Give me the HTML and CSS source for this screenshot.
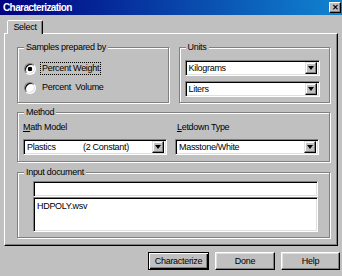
FILE: index.html
```html
<!DOCTYPE html>
<html lang="en">
<head>
    <meta charset="UTF-8">
    <title>Characterization</title>
    <link rel="stylesheet" href="styles.css">
</head>
<body>
    <div class="window">
        <div class="titlebar">
            <span class="title">Characterization</span>
            <span class="close-btn">&#x2715;</span>
        </div>
        <div class="tabs">
            <div class="tab">Select</div>
        </div>
        <div class="panel">
            <div class="top-row">
                <fieldset class="group">
                    <legend>Samples prepared by</legend>
                    <div class="group-body samples">
                        <div class="radio-row">
                            <span class="radio checked"></span>
                            <span class="radio-label focused">Percent Weight</span>
                        </div>
                        <div class="radio-row">
                            <span class="radio"></span>
                            <span class="radio-label">Percent&nbsp; Volume</span>
                        </div>
                    </div>
                </fieldset>
                <fieldset class="group">
                    <legend>Units</legend>
                    <div class="group-body units">
                        <div class="combo"><span class="combo-text">Kilograms</span><span class="combo-btn"></span></div>
                        <div class="combo"><span class="combo-text">Liters</span><span class="combo-btn"></span></div>
                    </div>
                </fieldset>
            </div>
            <fieldset class="group">
                <legend>Method</legend>
                <div class="group-body method">
                    <div class="field">
                        <div class="field-label"><u>M</u>ath Model</div>
                        <div class="combo"><span class="combo-text"><span class="col-a">Plastics</span>(2 Constant)</span><span class="combo-btn"></span></div>
                    </div>
                    <div class="field">
                        <div class="field-label"><u>L</u>etdown Type</div>
                        <div class="combo"><span class="combo-text">Masstone/White</span><span class="combo-btn"></span></div>
                    </div>
                </div>
            </fieldset>
            <fieldset class="group input-doc">
                <legend>Input document</legend>
                <div class="group-body doc">
                    <div class="edit-box"></div>
                    <div class="list-box">HDPOLY.wsv</div>
                </div>
            </fieldset>
        </div>
        <div class="buttons">
            <button class="btn default">Characterize</button>
            <button class="btn">Done</button>
            <button class="btn">Help</button>
        </div>
    </div>
</body>
</html>
```

FILE: styles.css
```css
:root {
    --face: #c0c0c0;
    --shadow: #808080;
    --light: #dfdfdf;
    --hilite: #fff;
    --dark: #000;
}
body {
    margin: 0;
    background: var(--face);
    font-family: 'Liberation Sans', Arial, sans-serif;
    font-size: 9px;
    letter-spacing: -0.3px;
    color: #000;
}
.window {
    width: 342px;
    height: 276px;
    background: var(--face);
    display: flex;
    flex-direction: column;
}
.titlebar {
    height: 15px;
    background: linear-gradient(to right, #000080, #1084d0);
    display: flex;
    align-items: center;
    justify-content: space-between;
    padding: 0 1px 0 3px;
}
.title {
    color: #fff;
    font-weight: bold;
    font-size: 10px;
    letter-spacing: -0.6px;
    line-height: 14px;
}
.close-btn {
    width: 10px;
    height: 9px;
    background: var(--face);
    border: 1px solid;
    border-color: var(--hilite) var(--dark) var(--dark) var(--hilite);
    box-shadow: inset -1px -1px 0 var(--shadow);
    font-size: 8px;
    font-weight: bold;
    line-height: 9px;
    text-align: center;
    letter-spacing: 0;
}
.tabs {
    display: flex;
    margin-top: 5px;
    padding-left: 7px;
}
.tab {
    position: relative;
    z-index: 1;
    width: 34px;
    height: 13px;
    margin-bottom: -1px;
    background: var(--face);
    border: 1px solid;
    border-bottom: none;
    border-color: var(--hilite) var(--dark) transparent var(--hilite);
    border-radius: 2px 2px 0 0;
    box-shadow: inset -1px 0 0 var(--shadow);
    line-height: 13px;
    text-align: center;
}
.panel {
    margin: 0 4px;
    border: 1px solid;
    border-color: var(--hilite) var(--dark) var(--dark) var(--hilite);
    box-shadow: inset -1px -1px 0 var(--shadow);
    padding: 8px 7px 7px 12px;
    display: flex;
    flex-direction: column;
    gap: 4px;
}
.top-row {
    display: grid;
    grid-template-columns: 1fr 1fr;
    gap: 10px;
}
.group {
    margin: 0;
    padding: 0;
    min-width: 0;
    border: 1px solid var(--shadow);
    box-shadow: inset 1px 1px 0 var(--hilite), 1px 1px 0 var(--hilite);
}
.group legend {
    margin-left: 6px;
    padding: 0 2px;
    line-height: 11px;
    background: var(--face);
}
.samples { padding: 9px 6px 8px 6px; }
.units { padding: 7px 9px 5px 5px; }
.units .combo + .combo { margin-top: 5px; }
.radio-row {
    display: flex;
    align-items: center;
    height: 13px;
}
.radio-row + .radio-row { margin-top: 6px; }
.radio {
    width: 10px;
    height: 10px;
    border-radius: 50%;
    background: #fff;
    border: 1px solid;
    border-color: var(--shadow) var(--hilite) var(--hilite) var(--shadow);
    box-shadow: inset 1px 1px 0 var(--dark), inset -1px -1px 0 var(--light);
}
.radio.checked {
    background: radial-gradient(circle, #000 0, #000 2px, #fff 2.6px);
}
.radio-label {
    margin-left: 4px;
    padding: 0 1px;
    line-height: 11px;
    border: 1px dotted transparent;
}
.radio-label.focused { border-color: #000; }
.combo {
    height: 16px;
    box-sizing: border-box;
    background: #fff;
    border: 1px solid;
    border-color: var(--shadow) var(--hilite) var(--hilite) var(--shadow);
    box-shadow: inset 1px 1px 0 var(--dark), inset -1px -1px 0 var(--light);
    display: flex;
    align-items: center;
    padding: 2px;
}
.combo-text {
    flex: 1;
    padding-left: 1px;
    line-height: 11px;
    white-space: nowrap;
}
.col-a {
    display: inline-block;
    width: 56px;
}
.combo-btn {
    width: 10px;
    height: 10px;
    background: var(--face);
    border: 1px solid;
    border-color: var(--light) var(--dark) var(--dark) var(--light);
    box-shadow: inset -1px -1px 0 var(--shadow), inset 1px 1px 0 var(--hilite);
    display: flex;
    align-items: center;
    justify-content: center;
}
.combo-btn::after {
    content: '';
    border-left: 3px solid transparent;
    border-right: 3px solid transparent;
    border-top: 4px solid #000;
}
.method {
    padding: 4px 10px 6px 5px;
    display: grid;
    grid-template-columns: 1fr 1fr;
    gap: 8px;
}
.field-label {
    line-height: 11px;
    margin-bottom: 6px;
}
.field:last-child .field-label { padding-left: 2px; }
.input-doc { margin-top: 1px; }
.doc { padding: 3px 11px 5px 15px; }
.edit-box, .list-box {
    background: #fff;
    border: 1px solid;
    border-color: var(--shadow) var(--hilite) var(--hilite) var(--shadow);
    box-shadow: inset 1px 1px 0 var(--dark), inset -1px -1px 0 var(--light);
    box-sizing: border-box;
}
.edit-box { height: 16px; }
.list-box {
    height: 35px;
    padding: 3px 3px;
    line-height: 11px;
}
.buttons {
    display: flex;
    justify-content: flex-end;
    gap: 6px;
    margin-top: 6px;
    padding-right: 2px;
}
.btn {
    height: 18px;
    width: 60px;
    padding: 0;
    background: var(--face);
    font-family: inherit;
    font-size: 9px;
    letter-spacing: -0.3px;
    color: #000;
    border: 1px solid;
    border-color: var(--hilite) var(--dark) var(--dark) var(--hilite);
    box-shadow: inset -1px -1px 0 var(--shadow), inset 1px 1px 0 var(--light);
}
.btn.default {
    width: 61px;
    border-color: var(--dark);
    box-shadow: inset 1px 1px 0 var(--hilite), inset -1px -1px 0 var(--dark), inset -2px -2px 0 var(--shadow);
}
.btn:last-child { width: 59px; }
```
